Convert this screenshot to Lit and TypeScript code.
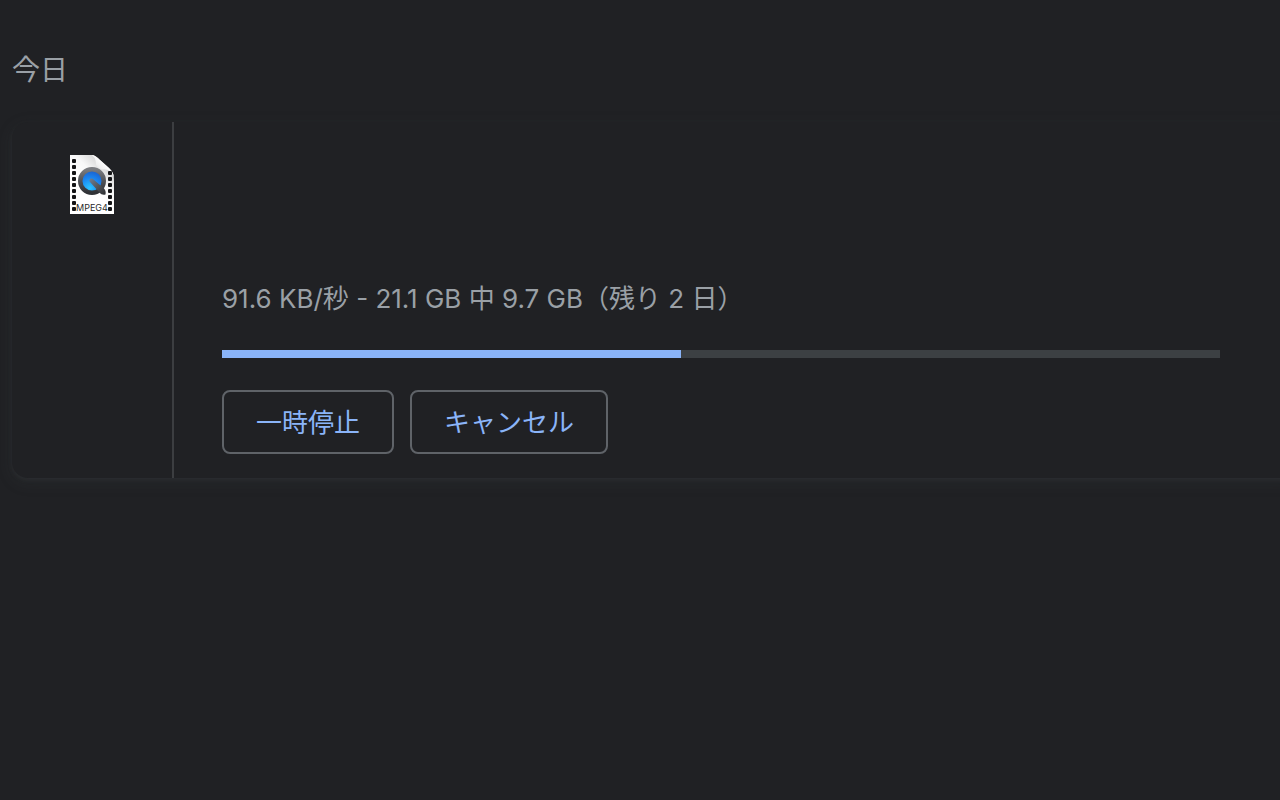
import { LitElement, html, css, svg } from "lit";
import { customElement, property } from "lit/decorators.js";

@customElement("mpeg4-icon")
class Mpeg4Icon extends LitElement {
  static styles = css`
    :host {
      display: block;
      width: 64px;
      height: 64px;
    }
    .icon {
      display: block;
      width: 100%;
      height: 100%;
    }
    .label {
      font-family: Inter, sans-serif;
      font-size: 9px;
      fill: #2a2a2a;
    }
  `;

  render() {
    const left = [7, 13, 19, 25, 31, 37, 43, 49, 55];
    const right = [19, 25, 31, 37, 43, 49, 55];
    const hole = (x: number, y: number) =>
      svg`<rect x=${x} y=${y} width="4" height="4" rx="1" fill="#141416" />`;
    return html`
      <svg class="icon" viewBox="0 0 64 64" role="img" aria-label="MPEG4">
        <defs>
          <linearGradient id="ring" x1="0" y1="0" x2="0" y2="1">
            <stop offset="0" stop-color="#7b7d81" />
            <stop offset="0.5" stop-color="#505257" />
            <stop offset="1" stop-color="#303236" />
          </linearGradient>
          <linearGradient id="tail" gradientUnits="userSpaceOnUse" x1="29" y1="27" x2="45" y2="43">
            <stop offset="0" stop-color="#6d7f96" />
            <stop offset="0.5" stop-color="#54575c" />
            <stop offset="1" stop-color="#2b2d30" />
          </linearGradient>
          <radialGradient id="lens" cx="0.4" cy="0.8" r="0.85">
            <stop offset="0" stop-color="#2cc4ff" />
            <stop offset="0.5" stop-color="#1a86f0" />
            <stop offset="1" stop-color="#1c55c4" />
          </radialGradient>
          <linearGradient id="fold" gradientUnits="userSpaceOnUse" x1="37" y1="19" x2="45" y2="11">
            <stop offset="0" stop-color="#d2d2d2" />
            <stop offset="0.4" stop-color="#f0f0f0" />
            <stop offset="1" stop-color="#fff" />
          </linearGradient>
          <linearGradient id="sheet" gradientUnits="userSpaceOnUse" x1="22" y1="30" x2="42" y2="10">
            <stop offset="0" stop-color="#fff" />
            <stop offset="0.5" stop-color="#f8f8f8" />
            <stop offset="1" stop-color="#d4d4d4" />
          </linearGradient>
        </defs>
        <path d="M10 3H31C35 3 37 5 40 8L49 16C53 20 54 23 54 28V62H10Z" fill="url(#sheet)" />
        <path d="M31 3C36 5 36 10 36 15C40 18 45 17 48 18C51 20 53 22 54 26C54 22 52 19 49 16L40 8C37 5 35 3 31 3Z" fill="url(#fold)" />
        ${left.map((y) => hole(12, y))} ${right.map((y) => hole(48, y))}
        <circle cx="32" cy="29" r="11.75" fill="url(#lens)" stroke="url(#ring)" stroke-width="4.5" />
        <path
          d="M30 30C28.5 28 30.5 25.5 33 27L44 36.5C45.5 38 46 40 45.5 42.5C43 43 41 42.5 39.5 40.5Z"
          fill="url(#tail)"
        />
        <text class="label" x="32" y="59" text-anchor="middle">MPEG4</text>
      </svg>
    `;
  }
}

@customElement("download-item")
class DownloadItem extends LitElement {
  @property() status = "";
  @property({ type: Number }) percent = 0;

  static styles = css`
    :host {
      display: flex;
      border-radius: 16px;
      background: #202124;
      box-shadow:
        0 2px 4px 0 rgba(60, 64, 67, 0.3),
        0 4px 12px 4px rgba(60, 64, 67, 0.15);
    }
    .file {
      flex: none;
      width: 160px;
      padding-top: 30px;
      display: flex;
      justify-content: center;
      border-right: 2px solid #3c3e41;
    }
    .details {
      flex: 1;
      min-width: 0;
      padding: 156px 80px 24px 48px;
    }
    .status {
      font-size: 26px;
      line-height: 42px;
      color: #9aa0a6;
    }
    .progress {
      height: 8px;
      margin: 30px 0 32px;
      background: #3c4043;
    }
    .bar {
      height: 100%;
      background: #8ab4f8;
    }
    .actions {
      display: flex;
      gap: 16px;
    }
    .action {
      height: 64px;
      padding: 0 32px 4px;
      border: 2px solid #5f6368;
      border-radius: 8px;
      background: transparent;
      color: #8ab4f8;
      font: inherit;
      font-size: 26px;
      cursor: pointer;
    }
  `;

  render() {
    return html`
      <div class="file"><mpeg4-icon></mpeg4-icon></div>
      <div class="details">
        <div class="status">${this.status}</div>
        <div
          class="progress"
          role="progressbar"
          aria-label=${this.status}
          aria-valuemin="0"
          aria-valuemax="100"
          aria-valuenow=${this.percent}
        >
          <div class="bar" style="width: ${this.percent}%"></div>
        </div>
        <div class="actions">
          <button class="action" type="button">一時停止</button>
          <button class="action" type="button">キャンセル</button>
        </div>
      </div>
    `;
  }
}

@customElement("app-root")
class AppRoot extends LitElement {
  static styles = css`
    :host {
      display: block;
      box-sizing: border-box;
      min-height: 100vh;
      padding: 48px 0 48px 12px;
      overflow: hidden;
      background: #202124;
      color: #9aa0a6;
      font-family: Inter, "Noto Sans CJK JP", sans-serif;
    }
    .date {
      margin: 0 0 30px;
      font-size: 28px;
      font-weight: 400;
      line-height: 44px;
    }
    /* The card runs past the right edge of the window. */
    .item {
      margin-right: -20px;
    }
  `;

  render() {
    return html`
      <h1 class="date" lang="ja">今日</h1>
      <download-item
        class="item"
        lang="ja"
        status="91.6 KB/秒 - 21.1 GB 中 9.7 GB（残り 2 日）"
        .percent=${46}
      ></download-item>
    `;
  }
}
